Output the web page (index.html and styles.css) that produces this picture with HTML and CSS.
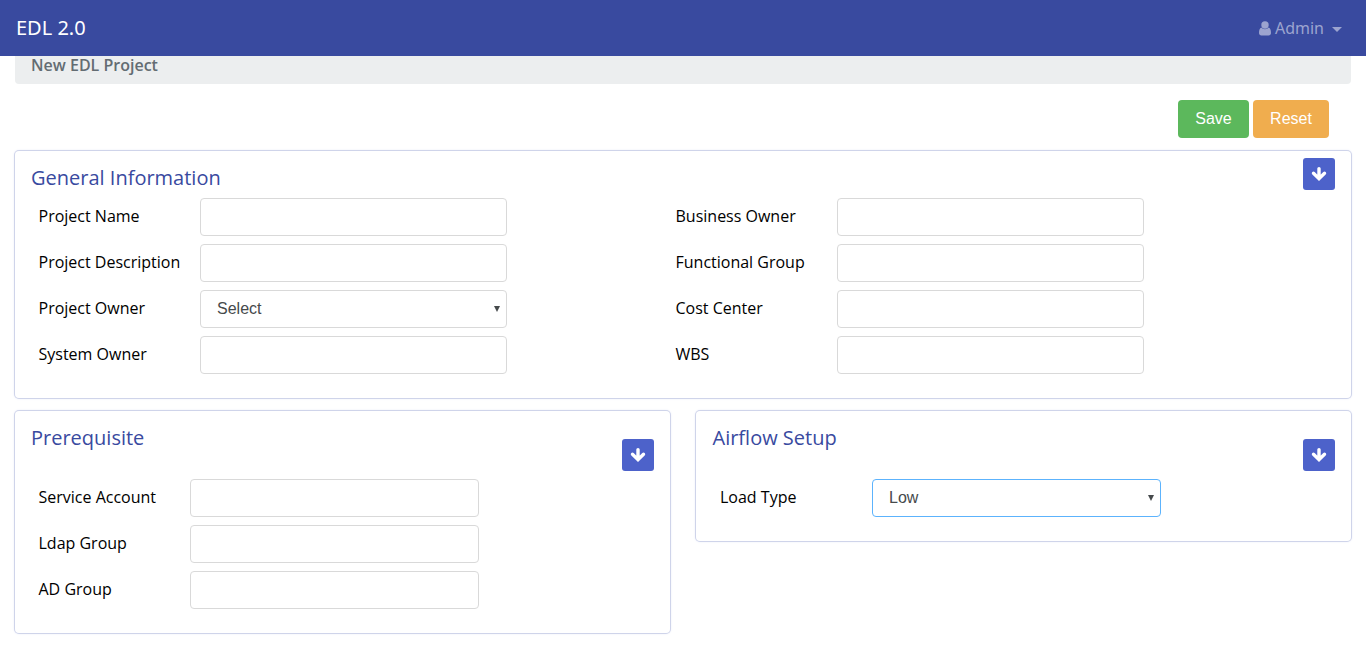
FILE: index.html
```html
<!DOCTYPE html>
<html lang="en">
<head>
<meta charset="utf-8">
<title>EDL 2.0</title>
<link rel="stylesheet" href="styles.css">
</head>
<body>
<svg class="defs" width="0" height="0" aria-hidden="true">
  <symbol id="arrow-down" viewBox="0 0 16 16"><path d="M8 2.600v9M2.500 7.200L8 12.600l5.500-5.400" fill="none" stroke="#fff" stroke-width="3.400" stroke-linecap="round"/></symbol>
</svg>
<header class="navbar">
  <a class="brand">EDL 2.0</a>
  <a class="user">
    <svg class="user-icon" width="12" height="15" viewBox="0 0 12 15"><circle cx="6" cy="4" r="3.700"/><path d="M2.400 6.600C.6 7.200 0 9.500 0 12c0 1.600 1 2.500 2.400 2.500h7.200c1.400 0 2.400-.9 2.400-2.500 0-2.500-.6-4.800-2.400-5.400C8.700 7.600 7.400 8.200 6 8.200s-2.700-.6-3.600-1.600z"/></svg>
    <span>Admin</span>
    <i class="caret"></i>
  </a>
</header>
<main>
  <div class="breadcrumb">New EDL Project</div>
  <div class="actions">
    <button class="btn save">Save</button>
    <button class="btn reset">Reset</button>
  </div>
  <section class="card general">
    <div class="card-head"><h2>General Information</h2><button class="toggle"><svg width="16" height="16"><use href="#arrow-down"/></svg></button></div>
    <div class="columns">
      <div class="fields">
        <label>Project Name</label><input class="control">
        <label>Project Description</label><input class="control">
        <label>Project Owner</label><div class="select"><select class="control"><option>Select</option></select></div>
        <label>System Owner</label><input class="control">
      </div>
      <div class="fields">
        <label>Business Owner</label><input class="control">
        <label>Functional Group</label><input class="control">
        <label>Cost Center</label><input class="control">
        <label>WBS</label><input class="control">
      </div>
    </div>
  </section>
  <div class="row">
    <section class="card half">
      <div class="card-head"><h2>Prerequisite</h2><button class="toggle"><svg width="16" height="16"><use href="#arrow-down"/></svg></button></div>
      <div class="fields">
        <label>Service Account</label><input class="control">
        <label>Ldap Group</label><input class="control">
        <label>AD Group</label><input class="control">
      </div>
    </section>
    <section class="card half airflow">
      <div class="card-head"><h2>Airflow Setup</h2><button class="toggle"><svg width="16" height="16"><use href="#arrow-down"/></svg></button></div>
      <div class="fields">
        <label>Load Type</label><div class="select"><select class="control active"><option>Low</option></select></div>
      </div>
    </section>
  </div>
</main>
</body>
</html>
```
FILE: styles.css
```css
* { box-sizing: border-box; }
body {
  margin: 0;
  min-height: 648px;
  background: #fff;
  color: #212121;
  font: 16px/24px "Open Sans", sans-serif;
}
.defs { display: block; }
.navbar {
  display: flex;
  justify-content: space-between;
  align-items: center;
  height: 56px;
  padding: 0 24px 0 16px;
  background: #394a9f;
}
.brand { color: #fff; font-family: "Noto Sans", sans-serif; font-size: 20px; line-height: 30px; }
.user { display: flex; align-items: center; color: #9ca4cf; font-family: "Noto Sans", sans-serif; }
.user-icon { margin-right: 4px; fill: #9ca4cf; }
.caret {
  margin: 3px 0 0 8px;
  border: 5px solid transparent;
  border-top-color: #9ca4cf;
  border-bottom: 0;
}
main { padding: 0 15px; }
.breadcrumb {
  height: 28px;
  padding-left: 16px;
  border-radius: 0 0 4px 4px;
  background: #eceeef;
  color: #636c72;
  font: 600 16px/18px "Open Sans", sans-serif;
}
.actions {
  display: flex;
  justify-content: flex-end;
  gap: 4px;
  padding: 16px 22px 13px 0;
}
.btn {
  height: 38px;
  padding: 0;
  border: 0;
  border-radius: 4px;
  color: #fff;
  font: 16px/36px "Liberation Sans", Arial, sans-serif;
}
.save { width: 71px; background: #5cb85c; }
.reset { width: 76px; background: #f0ad4e; }
.card {
  border-radius: 4px;
  background: #fff;
  box-shadow: 0 0 0 1px #cfd4ea, 0 0 3px #d5d9f0;
}
.general { height: 247px; margin-bottom: 13px; }
.card-head {
  display: flex;
  justify-content: space-between;
  padding: 7px 16px 0;
}
h2 {
  margin: 5px 0 0;
  color: #394a9f;
  font-size: 20px;
  font-weight: 400;
  line-height: 30px;
}
.toggle {
  display: flex;
  align-items: center;
  justify-content: center;
  width: 32px;
  height: 32px;
  padding: 0;
  border: 0;
  border-radius: 3px;
  background: #4d62ca;
}
.columns {
  display: grid;
  grid-template-columns: 637px 637px;
  padding-top: 5px;
}
.fields {
  display: grid;
  grid-template-columns: 161.500px 307px;
  row-gap: 8px;
  padding-left: 23.500px;
}
.general .card-head { height: 42px; }
label { height: 38px; line-height: 36px; color: #000; }
.control {
  display: block;
  width: 100%;
  height: 38px;
  padding: 0 16px;
  border: 1px solid #d9d9d9;
  border-radius: 4px;
  outline: 0;
  appearance: none;
  background: #fff;
  color: #464a4c;
  font: 16px/24px "Liberation Sans", Arial, sans-serif;
}
.control.active { border-color: #5cb3fd; }
select.control { padding-bottom: 1px; }
.select { position: relative; }
.select::after {
  content: "";
  position: absolute;
  top: 16px;
  right: 7px;
  border: 3px solid transparent;
  border-top: 6px solid #464a4c;
  border-bottom: 0;
}
.row { display: flex; align-items: flex-start; gap: 26px; }
.half { flex: 1; padding-bottom: 24px; }
.half .card-head { height: 68px; }
.half .toggle { margin-top: 21px; }
.half .fields { grid-template-columns: 151.500px 289px; }
.airflow .card-head { padding-left: 16.500px; }
.airflow .fields { padding-left: 24px; grid-template-columns: 152px 289px; }
```
